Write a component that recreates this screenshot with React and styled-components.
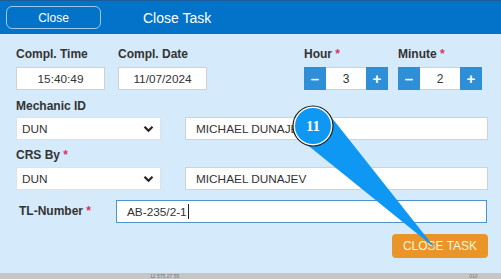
import React from "react";
import styled, { createGlobalStyle } from "styled-components";

const GlobalStyle = createGlobalStyle`
  html, body { margin: 0; padding: 0; }
  body {
    font-family: "Liberation Sans", Arial, sans-serif;
    background: #c8c8c8;
  }
`;

function App() {
  return (
    <>
      <GlobalStyle />
      <Page>
        <Dialog>
          {/* Header */}
          <Header>
            <CloseButton>Close</CloseButton>
            <Title>Close Task</Title>
          </Header>

          {/* Body */}
          <Body>
            <TopRow>
              <Group $gap={5}>
                <Label>Compl. Time</Label>
                <Field $w={89} $center readOnly value="15:40:49" />
              </Group>
              <Group $gap={5}>
                <Label>Compl. Date</Label>
                <Field $w={89} $center readOnly value="11/07/2024" />
              </Group>
              <Steppers>
                <Group $gap={5}>
                  <Label>Hour <Req>*</Req></Label>
                  <Stepper value="3" />
                </Group>
                <Group $gap={5}>
                  <Label>Minute <Req>*</Req></Label>
                  <Stepper value="2" />
                </Group>
              </Steppers>
            </TopRow>

            <Group $gap={3} $top={9}>
              <Label>Mechanic ID</Label>
              <PairRow>
                <Select value="DUN" />
                <Field $grow $pad={10} readOnly value="MICHAEL DUNAJEV" />
              </PairRow>
            </Group>

            <Group $gap={4} $top={8}>
              <Label>CRS By <Req>*</Req></Label>
              <PairRow>
                <Select value="DUN" />
                <Field $grow $pad={10} readOnly value="MICHAEL DUNAJEV" />
              </PairRow>
            </Group>

            <TlRow>
              <TlLabel>TL-Number <Req>*</Req></TlLabel>
              <FocusField>
                AB-235/2-1<Caret />
              </FocusField>
            </TlRow>

            <Footer>
              <SubmitButton>CLOSE TASK</SubmitButton>
            </Footer>
          </Body>
        </Dialog>
        <BackStrip>
          <BackText $left={150}>12 575 27 55</BackText>
          <BackText $left={290}>010</BackText>
        </BackStrip>

        {/* Annotation callout */}
        <Callout width="501" height="279" viewBox="0 0 501 279">
          <polygon points="305,143 332,118 435,248" fill="#0f97f4" />
          <circle cx="313" cy="126" r="20" fill="#ffffff" stroke="#1e1e1e" strokeWidth="1.2" />
          <circle cx="313" cy="126" r="18" fill="#0f97f4" />
          <text
            x="313"
            y="131"
            textAnchor="middle"
            fill="#ffffff"
            fontFamily="'Liberation Serif', serif"
            fontWeight="bold"
            fontSize="15"
          >
            11
          </text>
        </Callout>
      </Page>
    </>
  );
}

function Stepper({ value }) {
  return (
    <StepperWrap>
      <StepButton>–</StepButton>
      <StepValue readOnly value={value} />
      <StepButton>+</StepButton>
    </StepperWrap>
  );
}

function Select({ value }) {
  return (
    <SelectBox>
      <span>{value}</span>
      <svg width="11" height="8" viewBox="0 0 11 8">
        <path d="M1.5 1.8 L5.5 5.8 L9.5 1.8" fill="none" stroke="#222" strokeWidth="2.2" />
      </svg>
    </SelectBox>
  );
}

export default App;

const Page = styled.div`
  position: relative;
  width: 501px;
  height: 279px;
  overflow: hidden;
  background: #c8c8c8;
`;

const Dialog = styled.div`
  display: flex;
  flex-direction: column;
  height: 273px;
  background: #d5eafa;
`;

const Header = styled.div`
  display: flex;
  align-items: center;
  height: 34px;
  box-sizing: border-box;
  padding: 0 6px;
  background: #0273c8;
  border-top: 1px solid #1a5d99;
`;

const CloseButton = styled.div`
  display: flex;
  align-items: center;
  justify-content: center;
  width: 95px;
  height: 23px;
  box-sizing: border-box;
  border: 1px solid #9cc8ec;
  border-radius: 6px;
  color: #fff;
  font-size: 12px;
`;

const Title = styled.div`
  margin-left: 42px;
  color: #fff;
  font-size: 14px;
`;

const Body = styled.div`
  flex: 1;
  display: flex;
  flex-direction: column;
  padding: 13px 13px 0 16px;
  border-left: 2px solid #b9c4cc;
  margin-left: -2px;
`;

const TopRow = styled.div`
  display: flex;
  gap: 13px;
  padding-right: 6px;
`;

const Group = styled.div`
  display: flex;
  flex-direction: column;
  gap: ${(p) => p.$gap}px;
  margin-top: ${(p) => p.$top || 0}px;
`;

const Steppers = styled.div`
  display: flex;
  gap: 10px;
  margin-left: auto;
`;

const Label = styled.div`
  font-size: 12px;
  line-height: 15px;
  font-weight: bold;
  color: #333;
  white-space: nowrap;
`;

const Req = styled.span`
  color: #e0306a;
`;

const Field = styled.input`
  box-sizing: border-box;
  height: 23px;
  width: ${(p) => (p.$w ? `${p.$w}px` : "auto")};
  flex: ${(p) => (p.$grow ? 1 : "none")};
  min-width: 0;
  padding: 0 ${(p) => p.$pad || 0}px;
  border: 1px solid #cdd2d6;
  background: #fff;
  color: #333;
  font-family: "Liberation Sans", Arial, sans-serif;
  font-size: 11.8px;
  text-align: ${(p) => (p.$center ? "center" : "left")};
  outline: none;
`;

const StepperWrap = styled.div`
  display: flex;
  height: 23px;
`;

const StepButton = styled.div`
  width: 22px;
  display: flex;
  align-items: center;
  justify-content: center;
  background: #2e8ed6;
  color: #fff;
  font-size: 15px;
  font-weight: bold;
`;

const StepValue = styled.input`
  box-sizing: border-box;
  width: 40px;
  height: 23px;
  border: none;
  border-top: 1px solid #cdd2d6;
  border-bottom: 1px solid #cdd2d6;
  padding: 0;
  background: #fff;
  color: #333;
  font-family: "Liberation Sans", Arial, sans-serif;
  font-size: 12px;
  text-align: center;
  outline: none;
`;

const PairRow = styled.div`
  display: flex;
  gap: 24px;
`;

const SelectBox = styled.div`
  box-sizing: border-box;
  width: 145px;
  height: 23px;
  display: flex;
  align-items: center;
  justify-content: space-between;
  padding: 0 6px 0 5px;
  background: #fff;
  border: 1px solid #dde2e6;
  color: #333;
  font-size: 11.8px;
`;

const TlRow = styled.div`
  display: flex;
  align-items: center;
  margin-top: 10px;
  padding: 0 1px 0 3px;
`;

const TlLabel = styled(Label)`
  width: 97px;
`;

const FocusField = styled.div`
  flex: 1;
  box-sizing: border-box;
  height: 23px;
  display: flex;
  align-items: center;
  padding: 0 10px;
  background: #fff;
  border: 1px solid #4f93cc;
  color: #333;
  font-size: 11.8px;
`;

const Caret = styled.span`
  display: inline-block;
  width: 1px;
  height: 15px;
  margin-left: 1px;
  background: #222;
`;

const Footer = styled.div`
  display: flex;
  justify-content: flex-end;
  margin-top: 11px;
`;

const SubmitButton = styled.div`
  width: 96px;
  height: 24px;
  display: flex;
  align-items: center;
  justify-content: center;
  border-radius: 4px;
  background: #e9952a;
  color: #fdf3dc;
  font-size: 12px;
`;

const BackStrip = styled.div`
  height: 6px;
  display: flex;
  align-items: center;
  background: #c6c6c6;
`;

const BackText = styled.span`
  margin-left: ${(p) => p.$left}px;
  color: #777;
  font-size: 5px;
  line-height: 6px;
`;

const Callout = styled.svg`
  position: absolute;
  left: 0;
  top: 0;
  pointer-events: none;
`;
